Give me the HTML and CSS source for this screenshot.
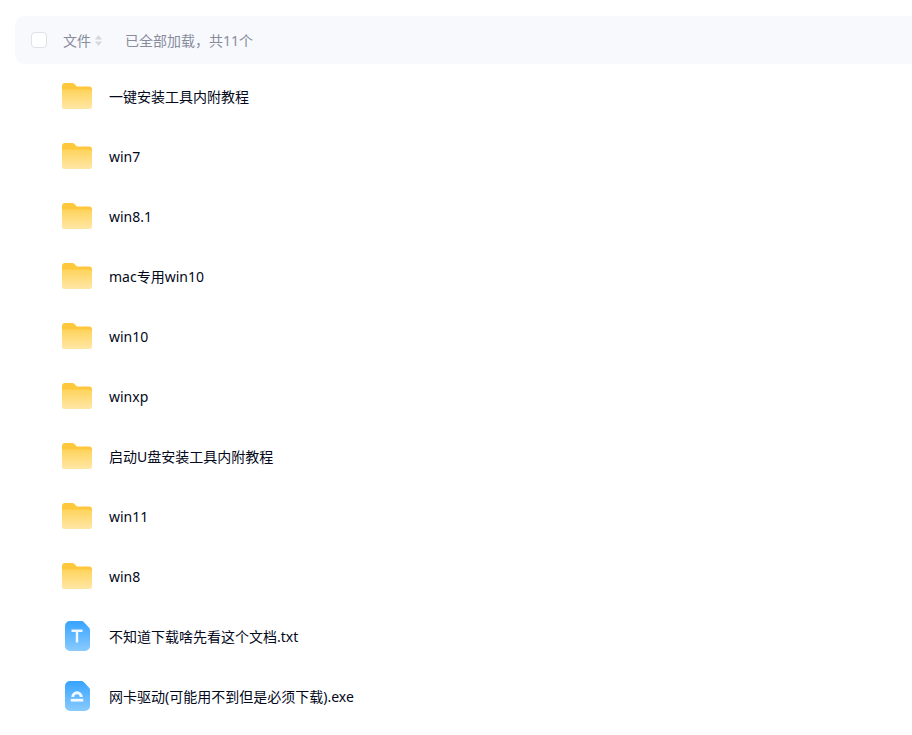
FILE: index.html
```html
<!DOCTYPE html>
<html lang="zh-CN">
<head>
<meta charset="utf-8">
<title>文件列表</title>
<link rel="stylesheet" href="styles.css">
</head>
<body>
<svg class="defs" width="0" height="0" aria-hidden="true">
  <defs>
    <linearGradient id="fb" x1="0" y1="0" x2="0" y2="1"><stop offset="0" stop-color="#ffd45c"/><stop offset="1" stop-color="#ffe7a6"/></linearGradient>
    <linearGradient id="blue" x1="0" y1="0" x2="0" y2="1"><stop offset="0" stop-color="#36a3ff"/><stop offset="1" stop-color="#8acbff"/></linearGradient>
    <symbol id="folder" viewBox="0 0 30 26">
      <path d="M0 3a3 3 0 0 1 3-3h7.200c1 0 1.700.4 2.300 1.100L14.800 3.500H27a3 3 0 0 1 3 3V10H0z" fill="#ffc73c"/>
      <path d="M0 6.500h27a3 3 0 0 1 3 3V24a2 2 0 0 1-2 2H2a2 2 0 0 1-2-2z" fill="url(#fb)"/>
    </symbol>
    <symbol id="doc" viewBox="0 0 25 30">
      <path d="M5 0h11.500c.8 0 1.500.3 2 .8l5.600 6c.6.6.9 1.300.9 2.100V25a5 5 0 0 1-5 5H5a5 5 0 0 1-5-5V5a5 5 0 0 1 5-5z" fill="url(#blue)"/>
    </symbol>
  </defs>
</svg>
<main class="page">
  <header class="head">
    <span class="check"></span>
    <span class="col">文件</span>
    <svg class="sort" width="7" height="11" viewBox="0 0 7 11"><path d="M3.500 0 7 4.400H0z" fill="#d4d7de"/><path d="M3.500 11 0 6.600h7z" fill="#d4d7de"/></svg>
    <span class="count">已全部加载，共11个</span>
  </header>
  <ul class="list">
    <li class="row"><svg class="ico"><use href="#folder"/></svg><span class="name">一键安装工具内附教程</span></li>
    <li class="row"><svg class="ico"><use href="#folder"/></svg><span class="name">win7</span></li>
    <li class="row"><svg class="ico"><use href="#folder"/></svg><span class="name">win8.1</span></li>
    <li class="row"><svg class="ico"><use href="#folder"/></svg><span class="name">mac专用win10</span></li>
    <li class="row"><svg class="ico"><use href="#folder"/></svg><span class="name">win10</span></li>
    <li class="row"><svg class="ico"><use href="#folder"/></svg><span class="name">winxp</span></li>
    <li class="row"><svg class="ico"><use href="#folder"/></svg><span class="name">启动U盘安装工具内附教程</span></li>
    <li class="row"><svg class="ico"><use href="#folder"/></svg><span class="name">win11</span></li>
    <li class="row"><svg class="ico"><use href="#folder"/></svg><span class="name">win8</span></li>
    <li class="row">
      <svg class="ico doc" viewBox="0 0 25 30"><use href="#doc"/><path d="M6.500 8.500h11v2.400h-4.300V21.500h-2.400V10.900H6.500z" fill="#fff" fill-opacity=".9"/></svg>
      <span class="name">不知道下载啥先看这个文档.txt</span>
    </li>
    <li class="row">
      <svg class="ico doc" viewBox="0 0 25 30"><use href="#doc"/><path d="M6.300 16a5.700 5.700 0 0 1 11.400 0h-3a2.700 2.700 0 0 0-5.400 0z" fill="#fff" fill-opacity=".9"/><path d="M5.700 17.800h12.600v2.800H5.700z" fill="#fff" fill-opacity=".9"/></svg>
      <span class="name">网卡驱动(可能用不到但是必须下载).exe</span>
    </li>
  </ul>
</main>
</body>
</html>
```
FILE: styles.css
```css
html, body {
  margin: 0;
  padding: 0;
  background: #fff;
  overflow: hidden;
}
body {
  font-family: "Noto Sans", "Noto Sans CJK SC", sans-serif;
  font-size: 14px;
}
.defs {
  display: block;
  height: 0;
}
.page {
  padding: 16px 0 0 15px;
}
.head {
  display: flex;
  align-items: center;
  height: 48px;
  padding-left: 16px;
  background: #f8f9fc;
  border-radius: 10px 0 0 10px;
  color: #878c9c;
}
.check {
  box-sizing: border-box;
  width: 16px;
  height: 16px;
  background: #fff;
  border: 1px solid #dfe1e8;
  border-radius: 4px;
}
.col {
  margin-left: 16px;
}
.sort {
  margin-left: 4px;
}
.count {
  margin-left: 23px;
}
.list {
  list-style: none;
  margin: 2px 0 0;
  padding: 0 0 0 47px;
}
.row {
  display: flex;
  align-items: center;
  height: 60px;
}
.ico {
  flex: none;
  width: 30px;
  height: 26px;
  margin-right: 17px;
}
.ico.doc {
  width: 25px;
  height: 30px;
  margin-left: 3px;
  margin-right: 19px;
}
.name {
  color: #03081a;
}
```
